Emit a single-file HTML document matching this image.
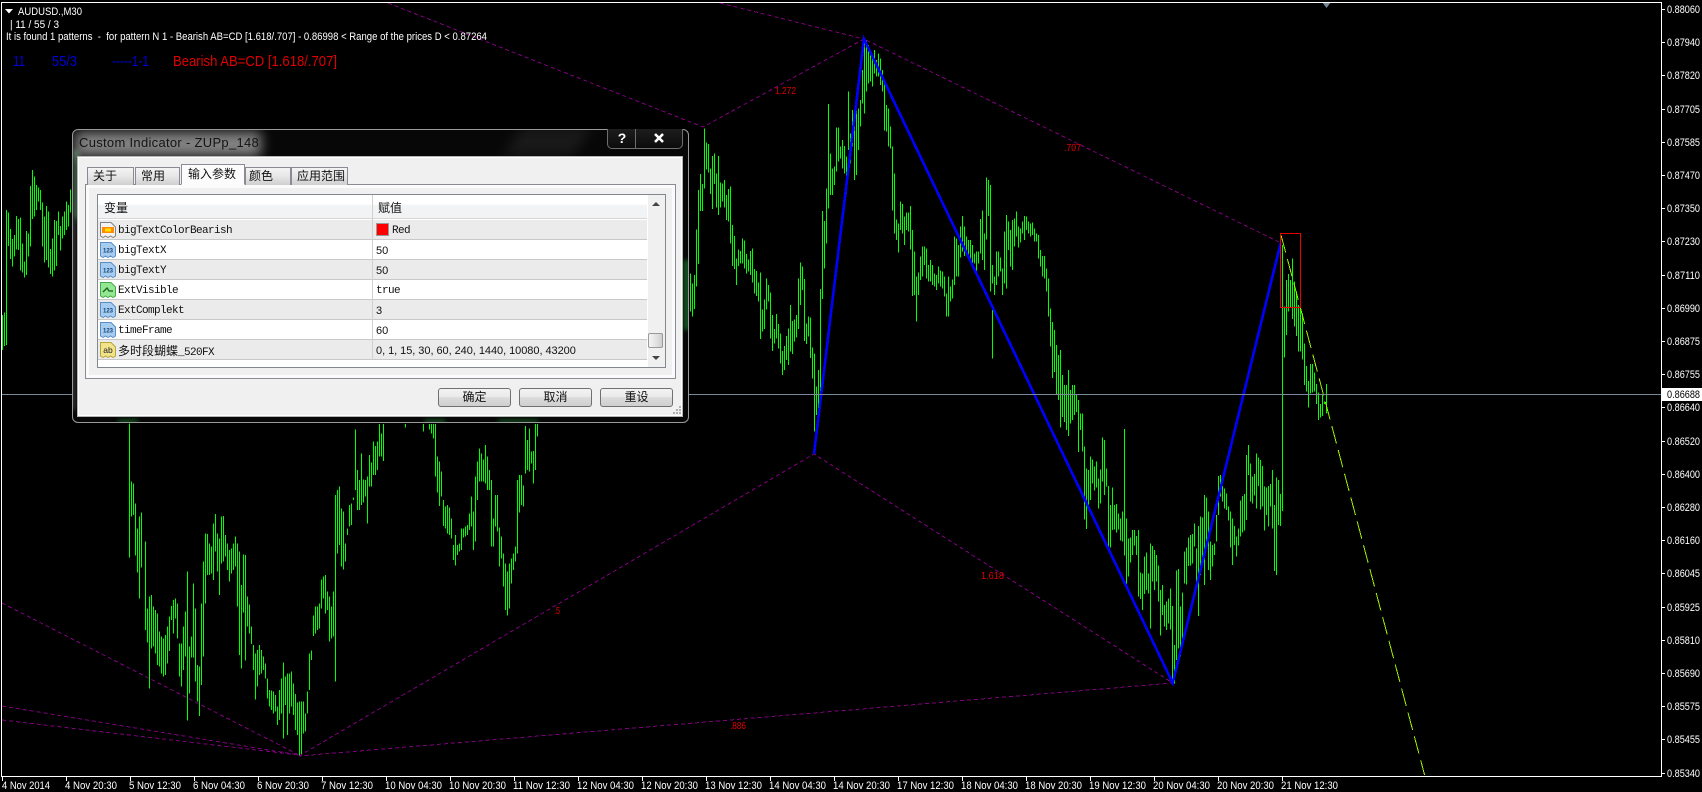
<!DOCTYPE html>
<html><head><meta charset="utf-8"><title>AUDUSD.,M30</title>
<style>
html,body{margin:0;padding:0;background:#000;width:1702px;height:792px;overflow:hidden}
svg.c{position:absolute;left:0;top:0}
.t{font-family:"Liberation Sans",sans-serif;font-size:11px;fill:#fff;white-space:pre}
.b{fill:none;stroke:#00ff00;stroke-width:1;vector-effect:non-scaling-stroke;shape-rendering:crispEdges}
.a{position:absolute;box-sizing:border-box}
.cjk{font-family:"Liberation Sans","Noto Sans CJK SC",sans-serif;font-size:12px;color:#111}
.tab{position:absolute;box-sizing:border-box;top:167px;height:18px;border:1px solid #898c95;border-bottom:0;background:linear-gradient(#f4f4f4,#e6e6e6 50%,#cfcfcf);line-height:16px;font-family:"Liberation Sans","Noto Sans CJK SC",sans-serif;font-size:12px;color:#111;white-space:nowrap}
.row{position:absolute;left:98px;width:549px;height:20px;border-bottom:1px solid #c8c8c8;box-sizing:border-box}
.g{background:#ebebeb}.w{background:#fff}
.n{position:absolute;left:20px;top:1px;line-height:20px;font-family:"Liberation Mono",monospace;font-size:11px;letter-spacing:-.6px;color:#111;white-space:nowrap}
.v{position:absolute;left:278px;top:1px;line-height:20px;font-family:"Liberation Sans",sans-serif;font-size:11px;letter-spacing:-.05px;color:#111;white-space:nowrap}
.m{font-family:"Liberation Mono",monospace;letter-spacing:-.6px}
.ic{position:absolute;left:2px;top:2px;width:16px;height:16px}
.btn{position:absolute;box-sizing:border-box;top:388px;width:73px;height:19px;border:1px solid #707070;border-radius:3px;background:linear-gradient(#f3f3f3,#ebebeb 45%,#dcdcdc 50%,#cfcfcf);text-align:center;line-height:17px;font-family:"Liberation Sans","Noto Sans CJK SC",sans-serif;font-size:12px;color:#111}
</style></head><body>
<svg class="c" width="1702" height="792" viewBox="0 0 1702 792" xmlns="http://www.w3.org/2000/svg">
<rect width="1702" height="792" fill="#000"/>
<!-- bars -->
<g transform="translate(0,160) scale(.33333333)"><path class="b" d="M7 465V570M13 457V558M19 150V555M25 158V258M31 207V297M37 237V320M43 225V290M49 168V268M55 177V270M61 172V332M67 250V338M73 305V353M79 213V345M85 220V290M91 78V260M97 30V177M103 50V170M109 75V150M115 82V125M121 90V150M127 128V260M133 170V308M139 138V300M145 155V323M151 267V342M157 235V350M163 180V332M169 183V318M175 155V225M181 198V272M187 170V235M193 155V225M199 125V210M205 135V200M211 88V158"/></g>
<g transform="translate(.5,420) scale(1,.33333333)"><path class="b" d="M129 10V412M131 185V290M133 190V285M135 250V407M137 325V458M139 290V535M141 277V442M145 365V630M147 565V668M149 530V805M151 525V685M153 560V680M155 570V700M157 580V735M159 635V740M161 650V760M163 655V770M165 645V765M167 620V730M169 590V693M171 558V600M173 540V640M175 535V595M177 550V655M179 670V770M181 670V800M183 620V750M185 575V710M187 455V902M189 680V820M191 650V712M193 490V712M195 565V785M197 735V845M199 740V888M201 550V795M203 425V710M205 340V550M207 342V465M209 370V465M211 380V460M213 310V480M215 282V395M217 340V455M219 355V525M221 290V430M223 288V425M225 345V410M227 370V450M229 390V485M231 385V460M233 370V450M235 350V440M237 370V560M239 395V705M241 495V745M243 403V578M245 405V722M247 530V620M249 553V640M251 620V672M253 675V750M255 700V838M257 690V800M259 675V765M261 690V760M263 710V750M265 730V775M267 775V835M269 810V860M271 812V870M273 815V880M275 825V875M277 860V915M279 810V900M281 775V880M283 727V955M285 770V855M287 760V945M289 760V880M291 755V860M293 790V885M295 822V930M297 848V945M299 845V1010M301 845V1005M303 845V940M305 880V935M307 815V880M309 700V810M311 692V720M313 587V648M315 560V640M317 560V630M319 550V625M321 478V565M323 470V535M325 465V580M327 515V570M329 530V665M331 560V655M333 515V650M335 225V785M337 210V400M339 200V375M341 265V440M343 275V448M345 370V425M347 325V345M349 255V320M351 250V315M353 232V240M355 28V210M357 150V270M359 180V270M361 100V255M363 178V248M365 180V230M367 170V310M369 105V200M371 128V200M373 65V165M375 78V165M377 65V150M379 12V110M381 40V110M383 12V123M405 12V22M423 12V35M429 12V28M431 12V40M433 12V55M435 12V170M437 110V218M439 125V258M441 155V230M443 240V318M445 260V325M447 255V340M449 262V345M451 295V355M453 375V420M455 345V437M457 375V405M459 370V395M461 325V390M463 325V352M465 320V350M467 315V345M469 280V330M471 230V320M473 275V390M475 170V365M477 125V240M479 85V185M481 100V185M483 118V185M485 75V190M487 110V210M489 150V210M491 180V380M493 295V380M495 225V320M497 225V335M499 322V440M501 350V415M503 400V500M505 430V570M507 455V587M509 430V565M511 415V490M513 400V450M515 380V425M517 180V400M519 165V278M521 165V255M523 197V260M525 18V160M527 60V150M529 25V155M531 95V130M533 93V190M535 12V150M537 12V50"/></g>
<g transform="translate(688,120) scale(.33333333)"><path class="b" d="M7 460V575M13 490V590M19 465V567M25 328V500M31 210V432M37 162V273M43 192V273M49 25V205M55 67V148M61 72V158M67 145V222M73 108V267M79 100V192M85 160V262M91 108V285M97 187V263M103 190V245M109 180V262M115 225V300M121 207V305M127 200V370M133 315V438M139 348V447M145 415V495M151 388V438M157 393V430M163 355V430M169 362V445M175 402V460M181 418V455M187 393V465M193 385V487M199 447V520M205 453V528M211 487V545M217 457V657M223 568V635M229 538V627M235 475V568M241 495V545M247 518V655M253 585V693M259 627V670M265 582V655M271 612V685M277 640V730M283 693V765M289 678V750M295 648V720M301 625V735M307 555V695M313 603V702M319 598V665M325 585V652M331 475V627M337 427V555M343 440V510M349 477V663M355 610V672M361 590V650M367 592V714M373 682V775M379 700V935M385 800V885M391 750V885M397 507V845M403 273V537M409 303V445M415 205V370"/></g>
<g transform="translate(800,20) scale(.33333333)"><path class="b" d="M85 252V565M91 400V525M97 445V525M103 440V495M109 322V455M115 322V425M121 380V415M127 360V445M133 378V460M139 410V520M145 215V390M151 340V430M157 270V380M163 290V480M169 272V465M175 265V390M181 240V320M187 150V250M193 60V280M199 60V215M205 75V190M211 90V185M217 115V200M223 90V160M229 120V170M235 100V170M241 115V195M247 150V215M253 190V332M259 255V335M265 265V380M271 320V385M277 380V572M283 460V640M289 598V660M295 610V697M301 545V630M307 552V640M313 590V675M319 578V630M325 578V635M331 558V688M337 630V828M343 695V825M349 770V905M355 758V825M361 710V780M367 680V770M373 680V735M379 685V775M385 735V785M391 720V785M397 735V795M403 760V800M409 765V810M415 740V790M421 752V800M427 755V805M433 770V830M439 820V890M445 770V890M451 800V845M457 778V835M463 650V795M469 655V770M475 675V770M481 620V712M487 588V695M493 620V708M499 650V705M505 660V705M511 660V730M517 675V730M523 700V730M529 695V760M535 695V730M541 597V700M547 572V720M553 640V750M559 473V658M565 480V588M571 495V815M577 735V790M577 870V1015M583 770V825M589 695V795M595 695V770M601 712V755M607 745V825M613 635V790M619 585V805M625 605V690M631 630V740M637 600V750M643 595V680M649 575V650M655 620V682M661 625V668M667 605V640M673 588V660M679 590V630M685 605V640M691 610V650M697 608V645M703 625V665M709 640V665M715 645V715M721 690V740M727 708V770M733 708V775M739 745V815M745 775V890M751 865V980"/></g>
<path class="b" d="M1052.5 322V378M1054.500 330V372M1056.500 345V395M1058.500 355V400M1060.500 350V400M1062.500 375V417M1064.500 385V422M1066.500 385V430M1068.500 370V436M1070.500 390V423M1072.500 385V420M1074.500 385V415M1076.500 395V412M1078.500 400V452"/>
<g transform="translate(1000,400) scale(.33333333)"><path class="b" d="M181 0V83M187 0V50M193 0V65M199 0V90M205 0V107M211 5V70M217 5V60M223 0V45M229 0V30M235 0V155M241 40V90M247 40V155M253 140V358M259 205V387M265 210V318M271 170V300M277 178V250M283 200V272M289 185V262M295 235V325M301 208V310M307 113V245M313 120V285M319 205V260M325 258V443M331 315V443M337 263V390M343 315V388M349 312V398M355 340V388M361 355V422M367 335V425M373 87V467M379 355V555M385 415V530M391 412V487M397 390V465M403 390V437M409 408V465M415 390V590M421 518V597M427 520V630M433 470V582M439 458V570M445 520V580M451 430V685M457 438V545M463 450V570M469 465V545M475 497V605M481 570V707M487 555V645M493 615V680M499 605V690M505 595V670M511 565V688M517 618V850M523 735V850M529 512V780M535 507V745M541 620V770M547 578V720M553 455V550M559 442V553M565 412V498M571 405V497M577 402V490M583 370V440M589 445V550M595 378V648M601 350V525M607 352V490M613 285V555M619 292V435M625 335V510M631 425V540M637 435V500M643 430V465M649 345V425M655 228V345M661 225V290M667 258V305M673 265V325M679 280V330M685 320V362M691 335V442M697 355V495M703 378V435M709 410V470M715 385V437M721 302V410M727 288V397M733 282V392M739 165V360M745 135V225M751 190V305M757 230V310M763 222V287M769 160V325M775 172V258M781 180V328M787 198V320M793 260V392M799 262V345M805 258V380M811 252V320M817 210V385M823 315V513M829 232V525M835 240V375M841 282V378"/></g>
<path class="b" d="M1282.5 245V511"/>
<g transform="translate(1240,210) scale(.33333333)"><path class="b" d="M133 290V443M139 210V375M145 192V305M151 210V292M157 145V327M163 215V350M169 245V378M175 285V425M181 285V425M187 310V448M193 400V525M199 468V545M205 513V593M211 462V550M217 462V548M223 488V545M229 522V582M235 548V630M241 582V623M247 552V618M253 575V582M259 522V610"/></g>
<!-- purple dotted -->
<g fill="none" stroke="#800080" stroke-width="1" stroke-dasharray="4 3" shape-rendering="crispEdges">
<path d="M2 603L299 755"/><path d="M2 706L299 755"/><path d="M2 720L299 755"/>
<path d="M299 756L814 454L1172.700 683L299 756"/>
<path d="M388 3L703 127L864 39L1281 243"/><path d="M720 3L864 39"/>
</g>
<!-- yellow dashed -->
<path d="M1281 235L1424.600 775" fill="none" stroke="#9ff000" stroke-width="1" stroke-dasharray="18 6.700" shape-rendering="crispEdges"/>
<!-- blue -->
<polyline points="814,454 864,39 1172.700,683 1280.700,243" fill="none" stroke="#0000ff" stroke-width="2.600" shape-rendering="crispEdges"/>
<rect x="1280.500" y="233.500" width="20" height="74" fill="none" stroke="#e80000" stroke-width="1" shape-rendering="crispEdges"/>
<!-- price line -->
<rect x="2" y="394" width="1660" height="1" fill="#778899"/>
<!-- shift triangle -->
<path d="M1322 2H1331L1326.500 8Z" fill="#778899"/>
<!-- frame -->
<g fill="#fff"><rect x="1" y="2" width="1" height="775"/><rect x="1" y="2" width="1661" height="1"/><rect x="1661" y="2" width="1" height="775"/><rect x="1" y="776" width="1661" height="1"/></g>
<!-- labels in chart -->
<g font-family="Liberation Sans, sans-serif" font-size="10" fill="#e00000">
<text x="775" y="94" textLength="21" lengthAdjust="spacingAndGlyphs">1.272</text>
<text x="1064" y="151" textLength="17" lengthAdjust="spacingAndGlyphs">.707</text>
<text x="981" y="579" textLength="23" lengthAdjust="spacingAndGlyphs">1.618</text>
<text x="554" y="614" textLength="6" lengthAdjust="spacingAndGlyphs">.5</text>
<text x="730" y="729" textLength="16" lengthAdjust="spacingAndGlyphs">.886</text>
</g>
<!-- top-left text -->
<path d="M5 9H13L9 13.500Z" fill="#fff"/>
<text class="t" x="18" y="15" textLength="64" lengthAdjust="spacingAndGlyphs">AUDUSD.,M30</text>
<text class="t" x="10" y="28" textLength="49" lengthAdjust="spacingAndGlyphs">| 11 / 55 / 3</text>
<text class="t" x="6" y="40" textLength="481" lengthAdjust="spacingAndGlyphs">It is found 1 patterns  -  for pattern N 1 - Bearish AB=CD [1.618/.707] - 0.86998 &lt; Range of the prices D &lt; 0.87264</text>
<g font-family="Liberation Sans, sans-serif" font-size="15">
<text x="13" y="66" fill="#0000d8" textLength="12" lengthAdjust="spacingAndGlyphs">11</text>
<text x="52" y="66" fill="#0000d8" textLength="25" lengthAdjust="spacingAndGlyphs">55/3</text>
<text x="112" y="66" fill="#0000d8" textLength="37" lengthAdjust="spacingAndGlyphs">-----1-1</text>
<text x="173" y="66" fill="#e00000" textLength="164" lengthAdjust="spacingAndGlyphs">Bearish AB=CD [1.618/.707]</text>
</g>
<!-- price axis -->
<g fill="#fff">
<rect x="1662" y="9" width="3" height="1"/><rect x="1662" y="42" width="3" height="1"/><rect x="1662" y="75" width="3" height="1"/><rect x="1662" y="109" width="3" height="1"/><rect x="1662" y="142" width="3" height="1"/><rect x="1662" y="175" width="3" height="1"/><rect x="1662" y="208" width="3" height="1"/><rect x="1662" y="241" width="3" height="1"/><rect x="1662" y="275" width="3" height="1"/><rect x="1662" y="308" width="3" height="1"/><rect x="1662" y="341" width="3" height="1"/><rect x="1662" y="374" width="3" height="1"/><rect x="1662" y="407" width="3" height="1"/><rect x="1662" y="441" width="3" height="1"/><rect x="1662" y="474" width="3" height="1"/><rect x="1662" y="507" width="3" height="1"/><rect x="1662" y="540" width="3" height="1"/><rect x="1662" y="573" width="3" height="1"/><rect x="1662" y="607" width="3" height="1"/><rect x="1662" y="640" width="3" height="1"/><rect x="1662" y="673" width="3" height="1"/><rect x="1662" y="706" width="3" height="1"/><rect x="1662" y="739" width="3" height="1"/><rect x="1662" y="773" width="3" height="1"/>
</g>
<g class="t" style="font-family:'Liberation Sans',sans-serif;font-size:11px" fill="#fff">
<text x="1667" y="13" textLength="33" lengthAdjust="spacingAndGlyphs">0.88060</text>
<text x="1667" y="46" textLength="33" lengthAdjust="spacingAndGlyphs">0.87940</text>
<text x="1667" y="79" textLength="33" lengthAdjust="spacingAndGlyphs">0.87820</text>
<text x="1667" y="113" textLength="33" lengthAdjust="spacingAndGlyphs">0.87705</text>
<text x="1667" y="146" textLength="33" lengthAdjust="spacingAndGlyphs">0.87585</text>
<text x="1667" y="179" textLength="33" lengthAdjust="spacingAndGlyphs">0.87470</text>
<text x="1667" y="212" textLength="33" lengthAdjust="spacingAndGlyphs">0.87350</text>
<text x="1667" y="245" textLength="33" lengthAdjust="spacingAndGlyphs">0.87230</text>
<text x="1667" y="279" textLength="33" lengthAdjust="spacingAndGlyphs">0.87110</text>
<text x="1667" y="312" textLength="33" lengthAdjust="spacingAndGlyphs">0.86990</text>
<text x="1667" y="345" textLength="33" lengthAdjust="spacingAndGlyphs">0.86875</text>
<text x="1667" y="378" textLength="33" lengthAdjust="spacingAndGlyphs">0.86755</text>
<text x="1667" y="411" textLength="33" lengthAdjust="spacingAndGlyphs">0.86640</text>
<text x="1667" y="445" textLength="33" lengthAdjust="spacingAndGlyphs">0.86520</text>
<text x="1667" y="478" textLength="33" lengthAdjust="spacingAndGlyphs">0.86400</text>
<text x="1667" y="511" textLength="33" lengthAdjust="spacingAndGlyphs">0.86280</text>
<text x="1667" y="544" textLength="33" lengthAdjust="spacingAndGlyphs">0.86160</text>
<text x="1667" y="577" textLength="33" lengthAdjust="spacingAndGlyphs">0.86045</text>
<text x="1667" y="611" textLength="33" lengthAdjust="spacingAndGlyphs">0.85925</text>
<text x="1667" y="644" textLength="33" lengthAdjust="spacingAndGlyphs">0.85810</text>
<text x="1667" y="677" textLength="33" lengthAdjust="spacingAndGlyphs">0.85690</text>
<text x="1667" y="710" textLength="33" lengthAdjust="spacingAndGlyphs">0.85575</text>
<text x="1667" y="743" textLength="33" lengthAdjust="spacingAndGlyphs">0.85455</text>
<text x="1667" y="777" textLength="33" lengthAdjust="spacingAndGlyphs">0.85340</text>
</g>
<rect x="1662" y="388" width="40" height="13" fill="#fff"/>
<text x="1667" y="398" font-family="Liberation Sans, sans-serif" font-size="11" fill="#000" textLength="33" lengthAdjust="spacingAndGlyphs">0.86688</text>
<!-- time axis -->
<path d="M2.500 777V781M66.500 777V781M130.500 777V781M194.500 777V781M258.500 777V781M322.500 777V781M386.500 777V781M450.500 777V781M514.500 777V781M578.500 777V781M642.500 777V781M706.500 777V781M770.500 777V781M834.500 777V781M898.500 777V781M962.500 777V781M1026.500 777V781M1090.500 777V781M1154.500 777V781M1218.500 777V781M1282.500 777V781" stroke="#fff" stroke-width="1" shape-rendering="crispEdges"/>
<g style="font-family:'Liberation Sans',sans-serif;font-size:11px" fill="#fff">
<text x="2" y="789" textLength="48" lengthAdjust="spacingAndGlyphs">4 Nov 2014</text>
<text x="65" y="789" textLength="52" lengthAdjust="spacingAndGlyphs">4 Nov 20:30</text>
<text x="129" y="789" textLength="52" lengthAdjust="spacingAndGlyphs">5 Nov 12:30</text>
<text x="193" y="789" textLength="52" lengthAdjust="spacingAndGlyphs">6 Nov 04:30</text>
<text x="257" y="789" textLength="52" lengthAdjust="spacingAndGlyphs">6 Nov 20:30</text>
<text x="321" y="789" textLength="52" lengthAdjust="spacingAndGlyphs">7 Nov 12:30</text>
<text x="385" y="789" textLength="57" lengthAdjust="spacingAndGlyphs">10 Nov 04:30</text>
<text x="449" y="789" textLength="57" lengthAdjust="spacingAndGlyphs">10 Nov 20:30</text>
<text x="513" y="789" textLength="57" lengthAdjust="spacingAndGlyphs">11 Nov 12:30</text>
<text x="577" y="789" textLength="57" lengthAdjust="spacingAndGlyphs">12 Nov 04:30</text>
<text x="641" y="789" textLength="57" lengthAdjust="spacingAndGlyphs">12 Nov 20:30</text>
<text x="705" y="789" textLength="57" lengthAdjust="spacingAndGlyphs">13 Nov 12:30</text>
<text x="769" y="789" textLength="57" lengthAdjust="spacingAndGlyphs">14 Nov 04:30</text>
<text x="833" y="789" textLength="57" lengthAdjust="spacingAndGlyphs">14 Nov 20:30</text>
<text x="897" y="789" textLength="57" lengthAdjust="spacingAndGlyphs">17 Nov 12:30</text>
<text x="961" y="789" textLength="57" lengthAdjust="spacingAndGlyphs">18 Nov 04:30</text>
<text x="1025" y="789" textLength="57" lengthAdjust="spacingAndGlyphs">18 Nov 20:30</text>
<text x="1089" y="789" textLength="57" lengthAdjust="spacingAndGlyphs">19 Nov 12:30</text>
<text x="1153" y="789" textLength="57" lengthAdjust="spacingAndGlyphs">20 Nov 04:30</text>
<text x="1217" y="789" textLength="57" lengthAdjust="spacingAndGlyphs">20 Nov 20:30</text>
<text x="1281" y="789" textLength="57" lengthAdjust="spacingAndGlyphs">21 Nov 12:30</text>
</g>
</svg>

<!-- dialog -->
<div class="a" style="left:72px;top:129px;width:617px;height:294px;border:1px solid #9a9a9a;border-radius:6px;background:#070707;overflow:hidden">
  <div style="position:absolute;left:0;top:20px;width:6px;height:70px;background:#5a8a66;filter:blur(3px);opacity:.8"></div>
  <div style="position:absolute;left:-3px;top:90px;width:6px;height:190px;background:#555;filter:blur(2px);opacity:.5"></div>
  <div style="position:absolute;right:-1px;top:130px;width:5px;height:70px;background:#1c8a34;filter:blur(2px);opacity:.7"></div>
  <div style="position:absolute;left:352px;bottom:-3px;width:20px;height:6px;background:#1c8a34;filter:blur(2px);opacity:.45"></div>
  <div style="position:absolute;left:45px;bottom:-3px;width:20px;height:6px;background:#1c8a34;filter:blur(2px);opacity:.45"></div>
  <div style="position:absolute;left:425px;bottom:-3px;width:40px;height:6px;background:#1c8a34;filter:blur(2px);opacity:.4"></div>
  <div style="position:absolute;left:2px;top:2px;width:186px;height:24px;background:rgba(255,255,255,.5);filter:blur(6px)"></div>
  <div style="position:absolute;left:440px;top:-4px;width:70px;height:30px;background:rgba(255,255,255,.07);filter:blur(7px);transform:skewX(-30deg)"></div>
</div>
<div class="a" style="left:79px;top:134px;line-height:18px;font-family:'Liberation Sans',sans-serif;font-size:13px;letter-spacing:.3px;color:#141414;white-space:nowrap">Custom Indicator - ZUPp_148</div>
<!-- caption buttons -->
<div class="a" style="left:607px;top:129px;width:76px;height:20px;border:1px solid #6e6e6e;border-top:0;border-radius:0 0 5px 5px;background:linear-gradient(#1d1d1d,#0c0c0c)"></div>
<div class="a" style="left:635px;top:129px;width:1px;height:19px;background:#6e6e6e"></div>
<div class="a" style="left:612px;top:130px;width:20px;text-align:center;line-height:16px;font-family:'Liberation Sans',sans-serif;font-weight:bold;font-size:14px;color:#fff">?</div>
<svg class="a" style="left:652px;top:132px" width="14" height="12"><path d="M3 2L11 10M11 2L3 10" stroke="#fff" stroke-width="2.600" fill="none"/></svg>
<!-- client -->
<div class="a" style="left:77px;top:156px;width:606px;height:261px;border:1px solid #b4b4b4;background:#f0f0f0;box-shadow:inset 0 0 0 1px #fff"></div>
<!-- page -->
<div class="a" style="left:85px;top:184px;width:591px;height:195px;border:1px solid #898c95;background:#f0f0f0;box-shadow:inset 0 0 0 3px #fbfbfb"></div>
<!-- tabs -->
<div class="tab" style="left:87px;width:47px;padding-left:5px">关于</div>
<div class="tab" style="left:135px;width:45px;padding-left:5px">常用</div>
<div class="tab" style="left:245px;width:46px;padding-left:3px">颜色</div>
<div class="tab" style="left:291px;width:57px;padding-left:5px">应用范围</div>
<div class="tab" style="left:181px;top:164px;width:64px;height:21px;background:#fcfcfc;padding-left:6px;line-height:18px;border-bottom:1px solid #fcfcfc">输入参数</div>
<!-- list -->
<div class="a" style="left:97px;top:194px;width:569px;height:174px;border:1px solid #828790;background:#fff"></div>
<div class="a" style="left:98px;top:195px;width:549px;height:24px;background:linear-gradient(#fff,#fff 40%,#f2f3f5 45%,#f2f3f5);border-bottom:1px solid #d6d6d6"></div>
<div class="a cjk" style="left:104px;top:199px;line-height:18px">变量</div>
<div class="a cjk" style="left:378px;top:199px;line-height:18px">赋值</div>

<div class="row g" style="top:220px"><svg class="ic" viewBox="0 0 16 16"><path d="M.5.5H11L15.500 5V14L13 15.500 10.500 14 8 15.500 5.500 14 3 15.500.5 14Z" fill="#f2f2f2" stroke="#808080"/><rect x="2" y="5" width="12" height="6" fill="#ff8c00"/><rect x="5" y="6.500" width="6" height="3" fill="#ffe000"/></svg><span class="n">bigTextColorBearish</span><span class="a" style="left:278px;top:3px;width:13px;height:13px;background:#f00;border:1px solid #999"></span><span class="v m" style="left:294px">Red</span></div>
<div class="row w" style="top:240px"><svg class="ic" viewBox="0 0 16 16"><path d="M.5.5H11L15.500 5V14L13 15.500 10.500 14 8 15.500 5.500 14 3 15.500.5 14Z" fill="#a6cdef" stroke="#5b8fc4"/><text x="8" y="10.500" font-family="Liberation Sans" font-weight="bold" font-size="6" fill="#14427a" text-anchor="middle">123</text></svg><span class="n">bigTextX</span><span class="v">50</span></div>
<div class="row g" style="top:260px"><svg class="ic" viewBox="0 0 16 16"><path d="M.5.5H11L15.500 5V14L13 15.500 10.500 14 8 15.500 5.500 14 3 15.500.5 14Z" fill="#a6cdef" stroke="#5b8fc4"/><text x="8" y="10.500" font-family="Liberation Sans" font-weight="bold" font-size="6" fill="#14427a" text-anchor="middle">123</text></svg><span class="n">bigTextY</span><span class="v">50</span></div>
<div class="row w" style="top:280px"><svg class="ic" viewBox="0 0 16 16"><path d="M.5.5H11L15.500 5V14L13 15.500 10.500 14 8 15.500 5.500 14 3 15.500.5 14Z" fill="#92e892" stroke="#4aa84a"/><path d="M3 10L7 6 9 9H13" fill="none" stroke="#1d5c1d" stroke-width="1.300"/></svg><span class="n">ExtVisible</span><span class="v m">true</span></div>
<div class="row g" style="top:300px"><svg class="ic" viewBox="0 0 16 16"><path d="M.5.5H11L15.500 5V14L13 15.500 10.500 14 8 15.500 5.500 14 3 15.500.5 14Z" fill="#a6cdef" stroke="#5b8fc4"/><text x="8" y="10.500" font-family="Liberation Sans" font-weight="bold" font-size="6" fill="#14427a" text-anchor="middle">123</text></svg><span class="n">ExtComplekt</span><span class="v">3</span></div>
<div class="row w" style="top:320px"><svg class="ic" viewBox="0 0 16 16"><path d="M.5.5H11L15.500 5V14L13 15.500 10.500 14 8 15.500 5.500 14 3 15.500.5 14Z" fill="#a6cdef" stroke="#5b8fc4"/><text x="8" y="10.500" font-family="Liberation Sans" font-weight="bold" font-size="6" fill="#14427a" text-anchor="middle">123</text></svg><span class="n">timeFrame</span><span class="v">60</span></div>
<div class="row g" style="top:340px"><svg class="ic" viewBox="0 0 16 16"><path d="M.5.5H11L15.500 5V14L13 15.500 10.500 14 8 15.500 5.500 14 3 15.500.5 14Z" fill="#f0e38a" stroke="#b5a53a"/><text x="8" y="11" font-family="Liberation Sans" font-size="8.500" fill="#222" text-anchor="middle">ab</text></svg><span class="n"><span style="font-family:'Noto Sans CJK SC',sans-serif;font-size:12px;letter-spacing:0">多时段蝴蝶</span>_520FX</span><span class="v">0, 1, 15, 30, 60, 240, 1440, 10080, 43200</span></div>
<div class="a" style="left:372px;top:195px;width:1px;height:165px;background:#d0d0d0"></div>

<!-- scrollbar -->
<div class="a" style="left:647px;top:195px;width:18px;height:172px;background:#f0f0f0;box-shadow:inset 1px 0 0 #fff"></div>
<div class="a" style="left:652px;top:202px;width:0;height:0;border-left:4px solid transparent;border-right:4px solid transparent;border-bottom:4px solid #444"></div>
<div class="a" style="left:652px;top:356px;width:0;height:0;border-left:4px solid transparent;border-right:4px solid transparent;border-top:4px solid #444"></div>
<div class="a" style="left:648px;top:333px;width:15px;height:15px;border:1px solid #9a9a9a;border-radius:2px;background:linear-gradient(90deg,#f4f4f4,#e4e4e4 50%,#cfcfcf)"></div>

<!-- buttons -->
<div class="btn" style="left:438px">确定</div>
<div class="btn" style="left:519px">取消</div>
<div class="btn" style="left:600px">重设</div>
<!-- grip -->
<svg class="a" style="left:670px;top:405px" width="12" height="12"><g fill="#b0b0b0"><rect x="9" y="1" width="2" height="2"/><rect x="6" y="4" width="2" height="2"/><rect x="9" y="4" width="2" height="2"/><rect x="3" y="7" width="2" height="2"/><rect x="6" y="7" width="2" height="2"/><rect x="9" y="7" width="2" height="2"/></g></svg>
</body></html>
